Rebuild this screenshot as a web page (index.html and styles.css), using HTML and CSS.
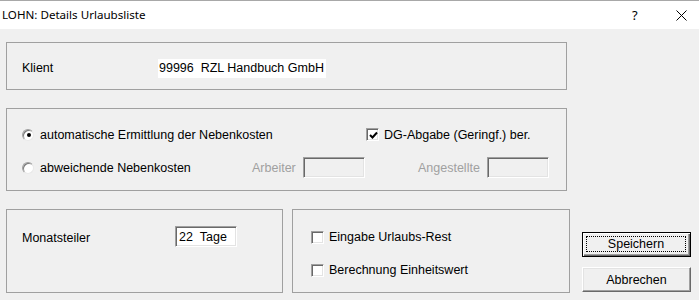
FILE: index.html
```html
<!DOCTYPE html>
<html lang="de">
<head>
<meta charset="utf-8">
<title>LOHN: Details Urlaubsliste</title>
<link rel="stylesheet" href="styles.css">
</head>
<body>
<div class="window">
  <header class="titlebar">
    <span class="title">LOHN: Details Urlaubsliste</span>
    <span class="tb-help">?</span>
    <span class="tb-close"><svg width="11" height="11" viewBox="0 0 11 11"><path d="M0.5 0.5 L10.5 10.5 M10.5 0.5 L0.5 10.5" stroke="#000" stroke-width="1" fill="none"/></svg></span>
  </header>
  <main class="client">
    <section class="group g-klient">
      <span class="lbl klient-lbl">Klient</span>
      <span class="value">99996&nbsp;&nbsp;RZL Handbuch GmbH</span>
    </section>

    <section class="group g-neben">
      <div class="row">
        <label class="opt opt-auto"><span class="radio checked"></span>automatische Ermittlung der Nebenkosten</label>
        <label class="opt opt-dg"><span class="check"><svg width="9" height="9" viewBox="0 0 9 9"><path d="M1 4 L3.5 6.5 L8 1.5" stroke="#000" stroke-width="2" fill="none"/></svg></span>DG-Abgabe (Geringf.) ber.</label>
      </div>
      <div class="row">
        <label class="opt opt-abw"><span class="radio"></span>abweichende Nebenkosten</label>
        <span class="dis dis-arb">Arbeiter</span><span class="field disabled"></span>
        <span class="dis dis-ang">Angestellte</span><span class="field disabled"></span>
      </div>
    </section>

    <div class="bottom">
      <section class="group g-monat">
        <span class="lbl monat-lbl">Monatsteiler</span>
        <span class="field edit">22&nbsp;&nbsp;Tage</span>
      </section>
      <section class="group g-opts">
        <label class="opt"><span class="check"></span>Eingabe Urlaubs-Rest</label>
        <label class="opt"><span class="check"></span>Berechnung Einheitswert</label>
      </section>
      <div class="buttons">
        <button class="btn default"><span class="focus">Speichern</span></button>
        <button class="btn">Abbrechen</button>
      </div>
    </div>
  </main>
</div>
</body>
</html>
```
FILE: styles.css
```css
* { box-sizing: border-box; }
html, body { margin: 0; padding: 0; }
body {
  width: 699px;
  height: 300px;
  overflow: hidden;
  background: #f0f0f0;
  font-family: "Liberation Sans", Arial, sans-serif;
  font-size: 12.5px;
  color: #000;
}
.window { width: 699px; height: 300px; }

.titlebar {
  height: 29px;
  background: #ffffff;
  border-top: 1px solid #a8a8a8;
  display: flex;
  align-items: center;
  padding-left: 2px;
}
.title {
  font-family: "Noto Sans", "Open Sans", sans-serif;
  font-size: 11.6px;
  flex: 1;
  padding-bottom: 1px;
}
.tb-help {
  font-family: "Noto Sans", sans-serif;
  font-size: 13px;
  width: 14px;
  margin-right: 30px;
}
.tb-close {
  display: flex;
  width: 11px;
  margin-right: 12px;
}

.client { padding: 13px 0 0 6px; }

.group {
  border: 1px solid #a0a0a0;
  background: #f0f0f0;
}

.g-klient {
  width: 561px;
  height: 48px;
  display: flex;
  align-items: center;
  padding: 4px 0 0 15px;
}
.klient-lbl { width: 136px; }
.value {
  background: #fff;
  height: 19px;
  display: flex;
  align-items: center;
  padding: 0 2px 0 1px;
}

.g-neben {
  width: 561px;
  height: 83px;
  margin-top: 18px;
  padding: 15px 0 0 15px;
  display: flex;
  flex-direction: column;
  gap: 12px;
}
.row { display: flex; align-items: center; height: 21px; }

.opt { display: flex; align-items: center; }
.opt-auto { width: 344px; }
.opt-abw { width: 230px; }
.opt .radio { margin-right: 6px; }
.opt .check { margin-right: 5px; }

.radio {
  width: 12px;
  height: 12px;
  border-radius: 50%;
  background: #fff;
  border: 1px solid;
  border-color: #a0a0a0 #e8e8e8 #e8e8e8 #a0a0a0;
  box-shadow: inset 1px 1px 0 #7a7a7a;
  display: flex;
  align-items: center;
  justify-content: center;
  flex: none;
}
.radio.checked::after {
  content: "";
  width: 4px;
  height: 4px;
  border-radius: 50%;
  background: #000;
  margin: 1px 0 0 1px;
}

.check {
  width: 13px;
  height: 13px;
  background: #fff;
  border: 1px solid;
  border-color: #a0a0a0 #fff #fff #a0a0a0;
  box-shadow: inset 1px 1px 0 #696969, inset -1px -1px 0 #e3e3e3;
  display: flex;
  align-items: center;
  justify-content: center;
  flex: none;
}
.check svg { margin: 1px 0 0 1px; }

.dis { color: #a0a0a0; }
.dis-arb { width: 51px; }
.dis-ang { width: 69px; margin-left: 53px; }

.field {
  width: 62px;
  height: 21px;
  border: 1px solid;
  border-color: #a0a0a0 #fff #fff #a0a0a0;
  box-shadow: inset 1px 1px 0 #696969, inset -1px -1px 0 #e3e3e3;
  display: flex;
  align-items: center;
}
.field.disabled { background: #f0f0f0; }
.field.edit { background: #fff; padding: 1px 0 0 3px; }

.bottom {
  display: flex;
  align-items: flex-start;
  margin-top: 18px;
}
.g-monat {
  width: 277px;
  height: 84px;
  padding: 16px 0 0 15px;
  display: flex;
  align-items: flex-start;
}
.monat-lbl { width: 153px; line-height: 22px; padding-top: 1px; }

.g-opts {
  width: 278px;
  height: 84px;
  margin-left: 9px;
  padding: 17px 0 0 18px;
  display: flex;
  flex-direction: column;
  gap: 13px;
}
.g-opts .opt { height: 20px; }

.buttons {
  margin-left: 12px;
  padding-top: 23px;
  display: flex;
  flex-direction: column;
  gap: 10px;
}
.btn {
  width: 109px;
  height: 25px;
  font: inherit;
  color: #000;
  background: #f0f0f0;
  border: 1px solid;
  border-color: #fff #696969 #696969 #fff;
  box-shadow: inset -1px -1px 0 #a0a0a0, inset 1px 1px 0 #e3e3e3;
  padding: 0;
  display: flex;
  align-items: center;
  justify-content: center;
}
.btn.default {
  border: 1px solid #000;
  box-shadow: inset 1px 1px 0 #fff, inset -1px -1px 0 #696969, inset -2px -2px 0 #a0a0a0;
  padding: 3px 4px 4px 3px;
}
.focus {
  flex: 1;
  align-self: stretch;
  border: 1px dotted #000;
  display: flex;
  align-items: center;
  justify-content: center;
}
```
